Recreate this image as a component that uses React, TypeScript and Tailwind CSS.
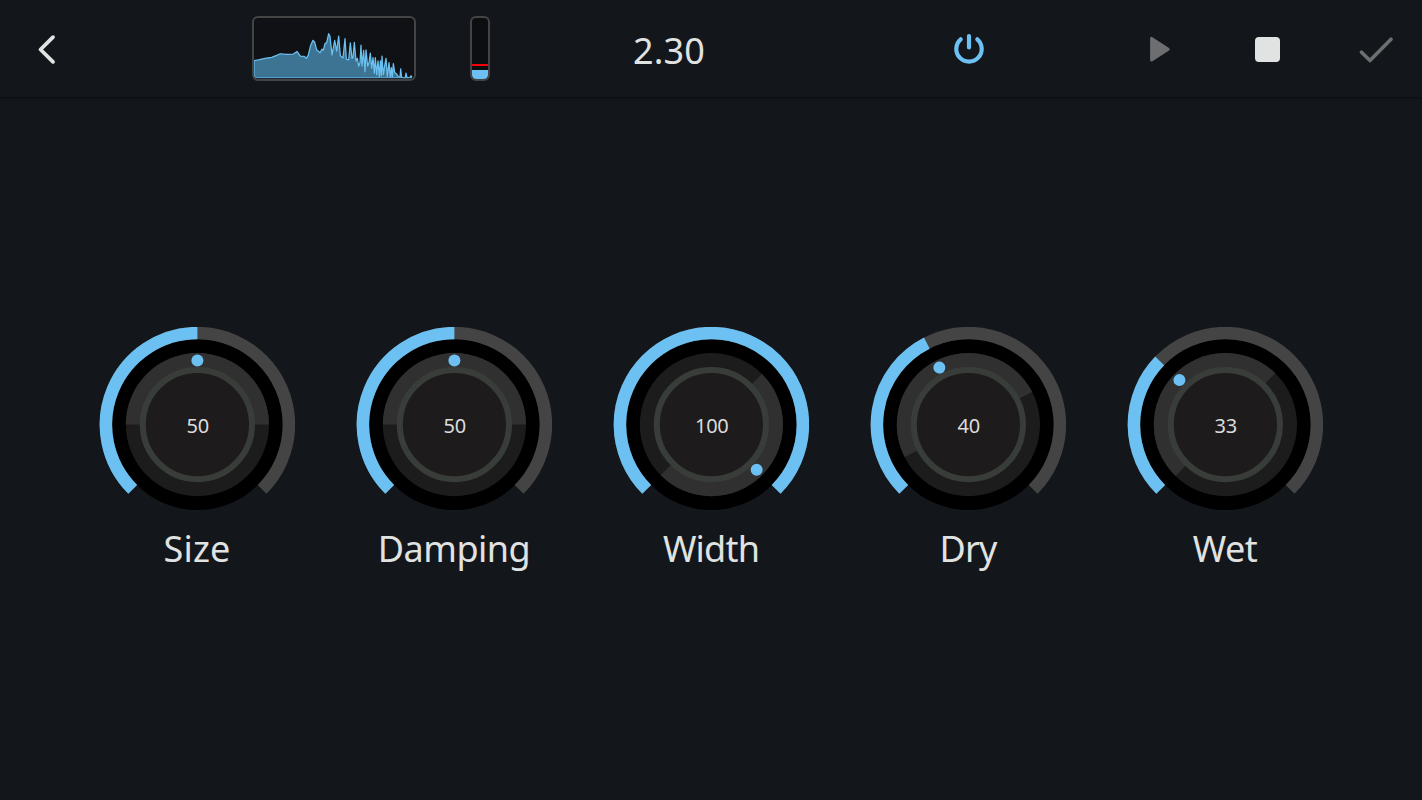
const SPECTRUM =
  "27,159 40,157 60,152 80,149 95,143 106,138 125,140 145,139 156,131 166,145 178,146 184,152 190,142 197,112 204,97 209,103 215,126 221,131 225,135 231,124 235,127 240,107 245,104 251,77 255,85 261,142 269,97 275,130 281,84 286,144 294,151 300,92 304,155 311,157 316,105 321,152 324,150 328,103 333,160 337,152 341,176 345,165 348,112 351,175 356,128 360,193 363,126 368,176 372,165 376,136 380,182 384,150 388,197 391,150 395,202 399,160 403,207 406,160 409,205 411,145 415,202 419,175 423,152 427,207 432,165 436,210 439,180 442,210 445,168 449,195 455,200 460,208 465,210 467,184 470,210 481,211 483,197 486,211 495,210 498,205 501,210";

const KNOBS = [
  { label: "Size", value: 50, tracking: "tracking-[0.2px]" },
  { label: "Damping", value: 50, tracking: "tracking-[-0.5px]" },
  { label: "Width", value: 100, tracking: "tracking-[-0.8px]" },
  { label: "Dry", value: 40, tracking: "tracking-[-0.8px]" },
  { label: "Wet", value: 33, tracking: "tracking-[-0.5px]" },
];

function polar(radius: number, angle: number) {
  const rad = (angle * Math.PI) / 180;
  return `${(radius * Math.sin(rad)).toFixed(2)} ${(-radius * Math.cos(rad)).toFixed(2)}`;
}

function arc(radius: number, from: number, to: number) {
  const large = to - from > 180 ? 1 : 0;
  return `M${polar(radius, from)} A${radius} ${radius} 0 ${large} 1 ${polar(radius, to)}`;
}

function Spectrum() {
  return (
    <div className="h-[65px] w-[164px] overflow-hidden rounded-md border-2 border-[#444444] bg-[#101114]">
      <svg viewBox="27 29 480 186" preserveAspectRatio="none" className="block h-full w-full">
        <polygon points={`${SPECTRUM} 501,212 27,212`} fill="#3d7494" />
        <polyline points={SPECTRUM} fill="none" stroke="#6ac0f0" strokeWidth="3.8" strokeLinejoin="round" />
        <path d="M28 159V203Q30 211 38 211H501" fill="none" stroke="#5ca8d4" strokeWidth="3" />
      </svg>
    </div>
  );
}

function LevelMeter() {
  return (
    <div className="flex h-[65px] w-5 flex-col justify-end overflow-hidden rounded-md border-2 border-[#444444] bg-[#0d0e12]">
      <div className="h-[2px] bg-[#f80008]" />
      <div className="mt-1 h-[9px] rounded-b bg-[#6cc1f2]" />
    </div>
  );
}

type KnobProps = {
  label: string;
  value: number;
  tracking: string;
};

function Knob({ label, value, tracking }: KnobProps) {
  const angle = -135 + value * 2.7;

  return (
    <div className="flex w-[257px] flex-col items-center">
      <svg viewBox="-98.4 -97.6 196 196" className="block size-[196px]">
        <circle r="85.5" fill="#000000" />
        <path d={arc(91.5, -135, 135)} fill="none" stroke="#444444" strokeWidth="12.5" />
        <path d={arc(91.5, -135, angle)} fill="none" stroke="#6cc1f2" strokeWidth="12.5" />
        <circle r="71.6" fill="#1c1c1c" />
        <path d={`${arc(71.6, angle - 90, angle + 90)}Z`} fill="#303030" />
        <circle r="54.6" fill="#1e1b1c" stroke="#393d3a" strokeWidth="6" />
        <circle cy="-64" r="6" fill="#6cc1f2" transform={`rotate(${angle})`} />
        <text x="0.3" y="8" textAnchor="middle" fontSize="20" letterSpacing="-0.3" fill="#dcdcdc">
          {value}
        </text>
      </svg>
      <div className={`mt-0.5 text-4xl leading-[48px] text-[#e0e3e2] ${tracking}`}>{label}</div>
    </div>
  );
}

export default function App() {
  return (
    <div className="flex h-screen w-full flex-col overflow-hidden bg-[#13171b] font-['Noto_Sans',sans-serif]">
      <header className="flex h-[99px] shrink-0 items-center border-b-2 border-[#0e1114]">
        <button aria-label="Back" className="ml-[35px]">
          <svg viewBox="0 0 24 32" className="block h-8 w-6" fill="none" stroke="#e0e3e2" strokeWidth="3.8" strokeLinecap="round" strokeLinejoin="round">
            <path d="M18 4.2L5.5 16.5L18 28.8" />
          </svg>
        </button>
        <div className="ml-[193px]">
          <Spectrum />
        </div>
        <div className="ml-[54px]">
          <LevelMeter />
        </div>
        <div className="ml-[129px] w-[100px] pt-1 text-center text-4xl leading-[48px] tracking-[0.2px] text-[#e0e3e2]">2.30</div>
        <button aria-label="Power" className="ml-[234px]">
          <svg viewBox="0 0 32 34" className="block h-[34px] w-8" fill="none" stroke="#6cc1f2" strokeWidth="4.2" strokeLinecap="round">
            <path d="M7.7 7.3A12.7 12.7 0 1 0 24.3 7.3M16 4V15.5" />
          </svg>
        </button>
        <button aria-label="Play" className="ml-[163px]">
          <svg viewBox="0 0 24 28" className="block h-7 w-6" fill="#6d6e70" stroke="#6d6e70" strokeWidth="3" strokeLinejoin="round">
            <path d="M3.6 3.4V25L20.2 14.2Z" />
          </svg>
        </button>
        <button aria-label="Stop" className="mt-0.5 ml-[83px] size-[25px] rounded bg-[#e0e3e2]" />
        <button aria-label="Apply" className="ml-[77px]">
          <svg viewBox="0 0 36 28" className="block h-7 w-9" fill="none" stroke="#6d6e70" strokeWidth="3.6" strokeLinecap="round" strokeLinejoin="round">
            <path d="M4.5 17.2L13 25.5L34 4.2" />
          </svg>
        </button>
      </header>
      <main className="flex justify-center pt-[228px]">
        {KNOBS.map((knob) => (
          <Knob key={knob.label} {...knob} />
        ))}
      </main>
    </div>
  );
}
